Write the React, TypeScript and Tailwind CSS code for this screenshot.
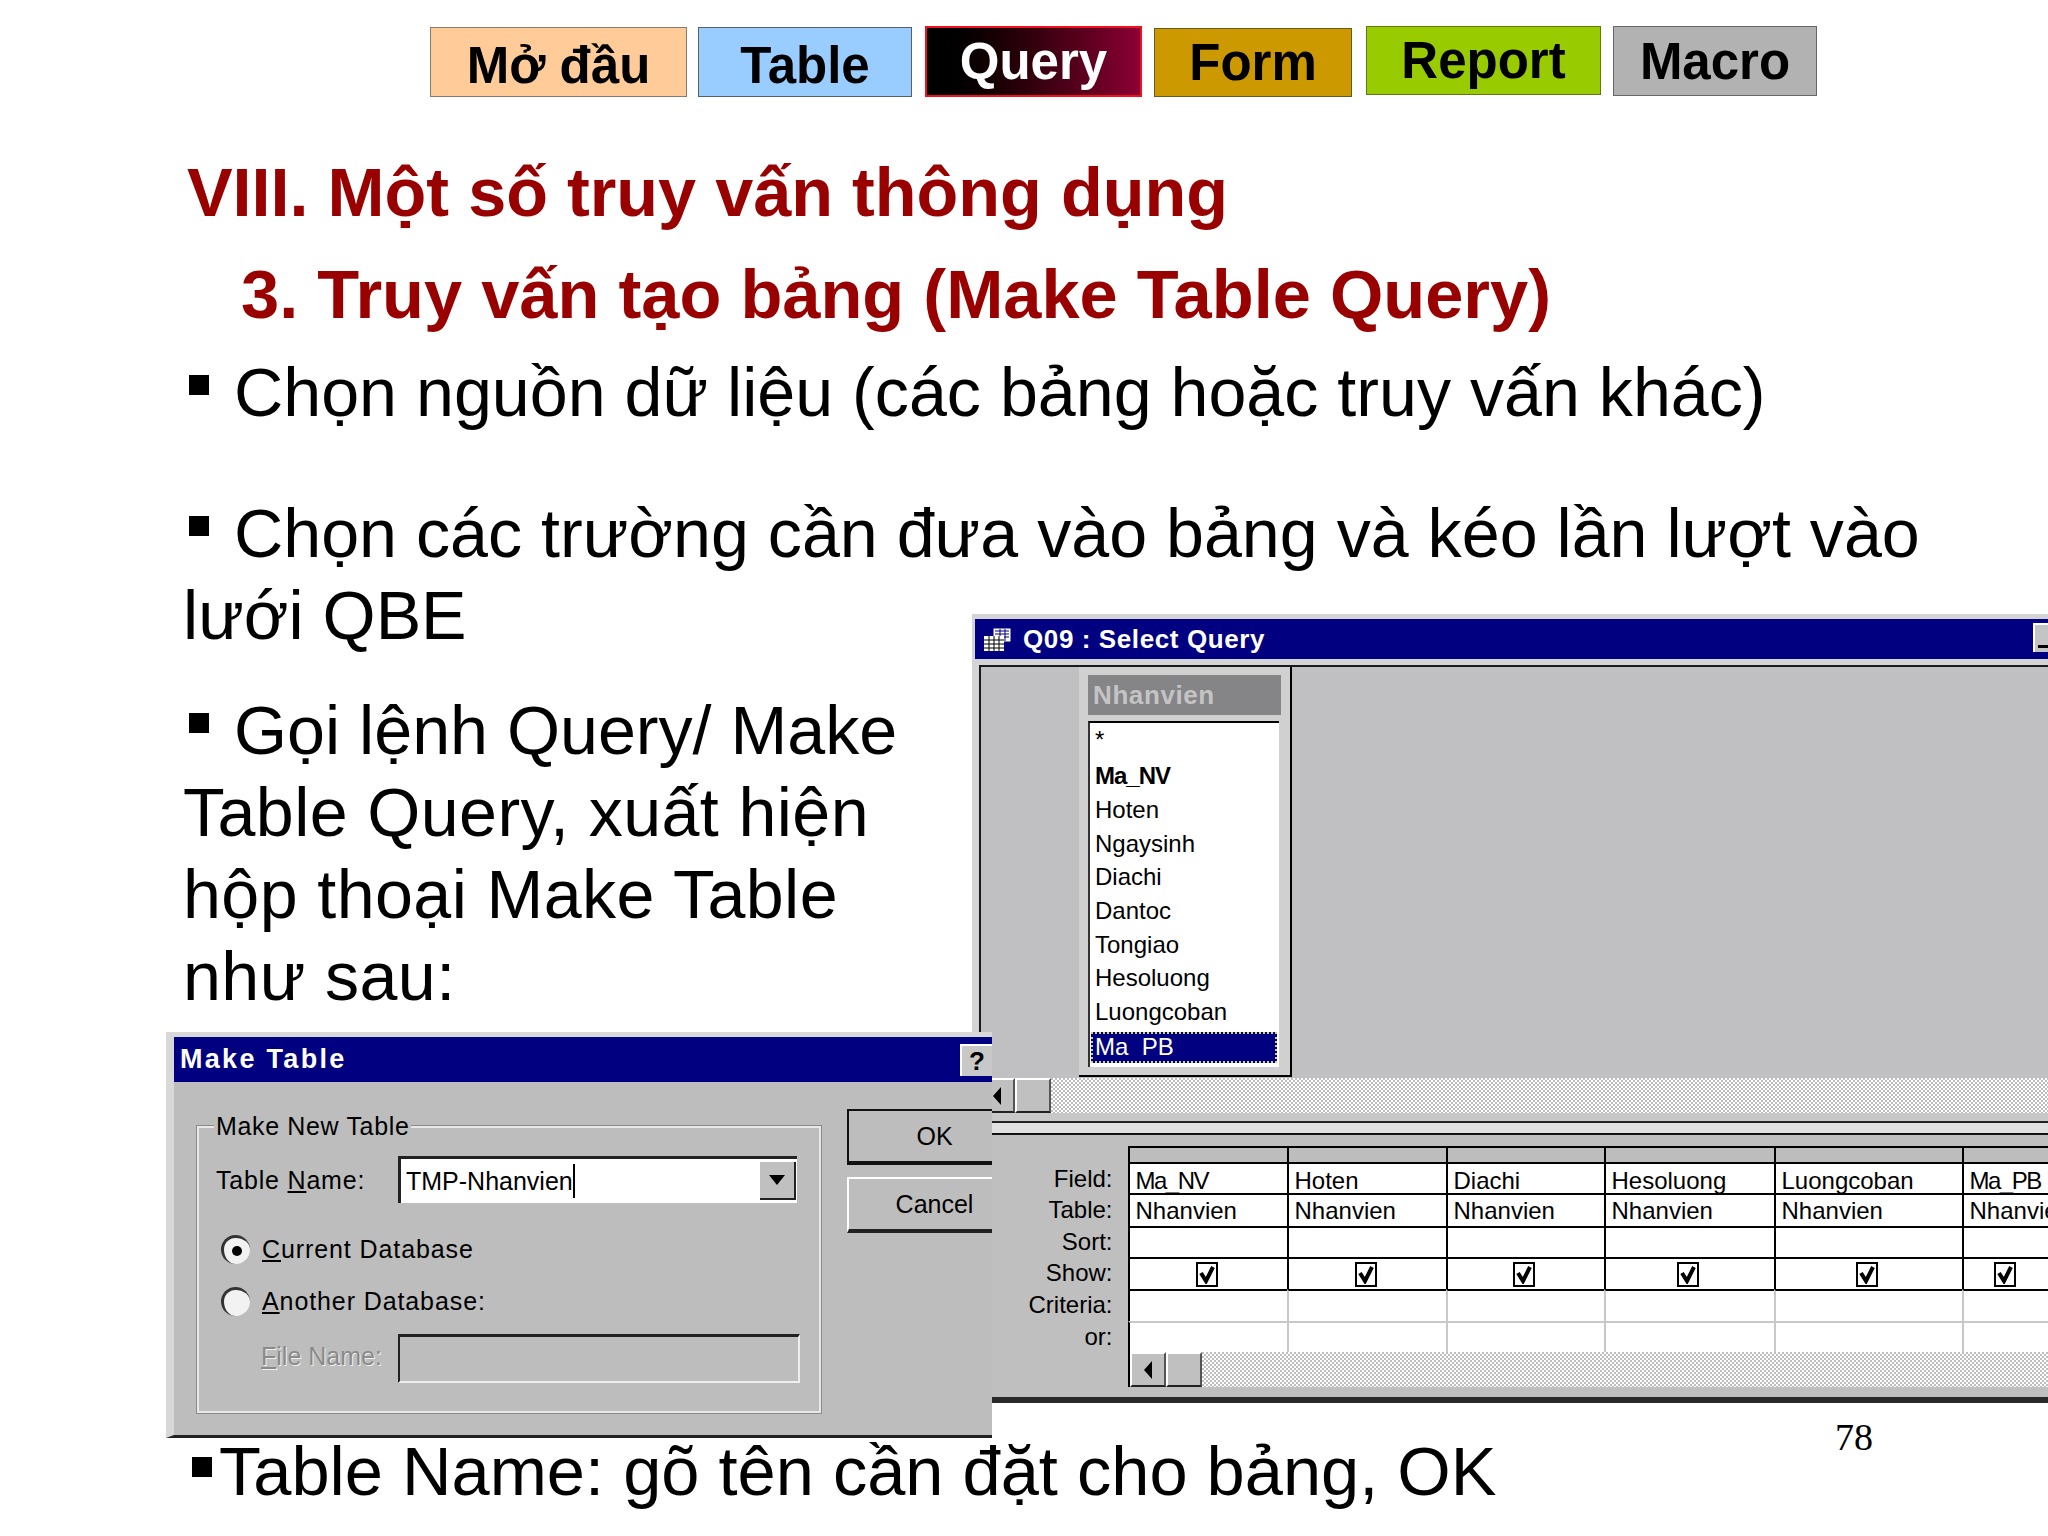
import React from 'react';

const navItems = [
  { label: 'Mở đầu', box: 'w-[257px] h-[70px] mt-[1px] mr-[11px] bg-[#ffcc99] border-[#8a7a6a]', text: 'text-black pt-[6px]' },
  { label: 'Table', box: 'w-[214px] h-[70px] mt-[1px] mr-[13px] bg-[#99ccff] border-[#55606a]', text: 'text-black pt-[6px]' },
  { label: 'Query', box: 'w-[217px] h-[71px] mr-[12px] bg-gradient-to-r from-black to-[#8c0033] border-[#f01020] border-2', text: 'text-white' },
  { label: 'Form', box: 'w-[198px] h-[69px] mt-[2px] mr-[14px] bg-[#cc9900] border-[#6a5a20]', text: 'text-black' },
  { label: 'Report', box: 'w-[235px] h-[69px] mr-[12px] bg-[#99cc00] border-[#5e7a10]', text: 'text-black' },
  { label: 'Macro', box: 'w-[204px] h-[70px] bg-[#b2b2b2] border-[#666666]', text: 'text-black' },
];

const tableFields = ['Hoten', 'Ngaysinh', 'Diachi', 'Dantoc', 'Tongiao', 'Hesoluong', 'Luongcoban'];

const gridLabels = ['Field:', 'Table:', 'Sort:', 'Show:', 'Criteria:', 'or:'];
const gridFields = ['Ma_NV', 'Hoten', 'Diachi', 'Hesoluong', 'Luongcoban', 'Ma_PB'];

// Square bullet used in front of the slide's list items
const Bullet = () => <span className="inline-block w-[20px] h-[20px] bg-black ml-[6px] mr-[25px] align-[21px]" />;

const ArrowLeft = () => (
  <svg width="10" height="18" viewBox="0 0 10 18" className="block">
    <path d="M9 0 L1 9 L9 18 Z" fill="#000" />
  </svg>
);

const Scrollbar = () => (
  <div className="flex h-[35px] w-full">
    <div className="w-[36px] h-full shrink-0 flex items-center justify-center bg-[#c0c0c0] border-t-2 border-l-2 border-t-white border-l-white border-r-2 border-b-2 border-r-[#555] border-b-[#222]">
      <ArrowLeft />
    </div>
    <div className="w-[36px] h-full shrink-0 bg-[#c0c0c0] border-t-2 border-l-2 border-t-white border-l-white border-r-2 border-b-2 border-r-[#555] border-b-[#222]" />
    <div className="flex-1 h-full bg-[repeating-conic-gradient(#ffffff_0_25%,#bdbdbd_0_50%)] bg-[length:4px_4px]" />
  </div>
);

const Check = () => (
  <div className="w-[22px] h-[25px] border-2 border-black bg-white flex items-center justify-center">
    <svg width="16" height="19" viewBox="0 0 16 19">
      <path d="M2 8 L7 16 L14 2" fill="none" stroke="#000" strokeWidth="4" />
    </svg>
  </div>
);

const QueryWindow = () => (
  <div className="absolute left-[972px] top-[614px] w-[1076px] h-[789px] bg-[#d4d3d5] pl-[3px] pt-[5px] flex flex-col overflow-hidden border-b-[6px] border-[#2a2a2a] text-[24px] leading-[30px] text-black">
    {/* Title bar */}
    <div className="h-[40px] shrink-0 bg-[#000080] flex items-center pl-[8px] gap-[10px] relative">
      <svg width="30" height="25" viewBox="0 0 30 25" className="shrink-0">
        <rect x="10" y="1" width="18" height="14" fill="#fff" stroke="#000080" />
        <path d="M12 4h14M12 7h14M12 10h14M17 2v12M22 2v12" stroke="#000080" strokeWidth="1" />
        <rect x="1" y="9" width="20" height="15" fill="#fff" />
        <path d="M1 13h20M1 17h20M1 21h20M6 9v15M11 9v15M16 9v15" stroke="#000" strokeWidth="1" />
      </svg>
      <span className="text-white font-bold text-[26px] tracking-[0.6px] leading-none">Q09 : Select Query</span>
      <div className="absolute right-0 top-[4px] w-[15px] h-[29px] bg-[#c4c4c4] border-t-2 border-l-2 border-white">
        <div className="w-[12px] h-[3px] bg-black mt-[20px] ml-[3px]" />
      </div>
    </div>

    {/* Table pane */}
    <div className="h-[6px] shrink-0" />
    <div className="h-[413px] shrink-0 bg-[#c0bfc1] border-t-2 border-l-2 border-[#1a1a1a] ml-[4px] pl-[98px]">
      <div className="w-[213px] h-[410px] bg-[#d0d0d0] border-r-2 border-b-2 border-r-black border-b-black pt-[8px] px-[9px] flex flex-col">
        <div className="h-[40px] shrink-0 bg-[#858487] flex items-center pl-[5px] text-[#c4c4c4] font-bold text-[26px] tracking-[0.6px]">Nhanvien</div>
        <div className="h-[6px] shrink-0" />
        <div className="h-[346px] shrink-0 w-[191px] bg-white border-t-2 border-l-2 border-t-black border-l-[#333] pl-[4px] flex flex-col">
          <div className="h-[32px] pl-[1px] pt-[1px] flex items-center">*</div>
          <div className="h-[4px]" />
          <div className="h-[34px] pl-[1px] flex items-center font-bold tracking-[-1px]">Ma_NV</div>
          {tableFields.map(field => (
            <div key={field} className="h-[33.7px] pl-[1px] flex items-center">{field}</div>
          ))}
          <div className="h-[31px] w-[186px] -ml-[3px] mt-[3px] bg-[#000080] border-2 border-dotted border-[#d8d870] flex items-center text-white pl-[2px]">
            Ma<span className="text-[#000080]">_</span>PB
          </div>
        </div>
      </div>
    </div>

    <div className="shrink-0 pl-[4px]">
      <Scrollbar />
    </div>

    {/* Splitter */}
    <div className="h-[10px] shrink-0 bg-[#c8c8c8] border-b-2 border-[#222] ml-[4px]" />
    <div className="h-[12px] shrink-0 bg-[#e0e0e0] border-b-2 border-[#111] ml-[4px]" />

    {/* Query grid */}
    <div className="flex-1 bg-[#bfbfbf] pt-[11px]">
      <div className="grid grid-cols-[152.5px_159px_159px_158px_170px_188px_88px] grid-rows-[16px_31px_33px_31px_32px_32px_31px_35px]">
        <div />
        {gridFields.map(field => (
          <div key={field} className="bg-[#bdbdbd] border-t-2 border-l-2 border-black" />
        ))}

        <div className="flex items-center justify-end pr-[15px] pt-[3px]">{gridLabels[0]}</div>
        {gridFields.map(field => (
          <div key={field} className={`bg-white border-t-2 border-l-2 border-black flex items-center pl-[6px] pt-[4px] overflow-hidden whitespace-nowrap ${field.startsWith('Ma_') ? 'tracking-[-1.5px]' : ''}`}>{field}</div>
        ))}

        <div className="flex items-center justify-end pr-[15px]">{gridLabels[1]}</div>
        {gridFields.map(field => (
          <div key={field} className="bg-white border-t-2 border-l-2 border-black flex items-center pl-[6px] pt-[1px] overflow-hidden whitespace-nowrap">Nhanvien</div>
        ))}

        <div className="flex items-center justify-end pr-[15px]">{gridLabels[2]}</div>
        {gridFields.map(field => (
          <div key={field} className="bg-white border-t-2 border-l-2 border-black" />
        ))}

        <div className="flex items-center justify-end pr-[15px]">{gridLabels[3]}</div>
        {gridFields.map(field => (
          <div key={field} className="bg-white border-t-2 border-l-2 border-black flex items-center justify-center pr-[3px] overflow-hidden">
            <Check />
          </div>
        ))}

        <div className="flex items-center justify-end pr-[15px]">{gridLabels[4]}</div>
        {gridFields.map((field, i) => (
          <div key={field} className={`bg-white border-t-2 border-t-black border-l-2 ${i === 0 ? 'border-l-black' : 'border-l-[#c8c8c8]'}`} />
        ))}

        <div className="flex items-center justify-end pr-[15px]">{gridLabels[5]}</div>
        {gridFields.map((field, i) => (
          <div key={field} className={`bg-white border-t-2 border-t-[#c8c8c8] border-l-2 ${i === 0 ? 'border-l-black' : 'border-l-[#c8c8c8]'}`} />
        ))}

        <div />
        <div className="col-span-6 border-l-2 border-b-2 border-black">
          <Scrollbar />
        </div>
      </div>
    </div>
  </div>
);

const DialogButton = ({ label, isDefault }: { label: string; isDefault?: boolean }) => (
  <div className={`h-[56px] w-full flex items-center justify-center pl-[28px] bg-[#bdbdbd] border-t-2 border-l-2 ${isDefault ? 'border-[#111] border-b-4 border-t-2' : 'border-white border-b-4 border-b-[#222]'}`}>
    {label}
  </div>
);

const Radio = ({ checked }: { checked?: boolean }) => (
  <div className="w-[29px] h-[29px] shrink-0 rounded-full bg-[#f2f2f2] border-t-[3px] border-l-[3px] border-[#333] flex items-center justify-center">
    {checked && <div className="w-[10px] h-[10px] rounded-full bg-black" />}
  </div>
);

const MakeTableDialog = () => (
  <div className="absolute left-[166px] top-[1032px] w-[826px] h-[406px] bg-[#bdbdbd] border-t-[5px] border-l-[8px] border-t-[#d8d8d8] border-l-[#d8d8d8] border-b-[3px] border-b-[#222] text-[25px] leading-[30px] text-black overflow-hidden">
    <div className="h-[45px] bg-[#000080] flex items-center justify-between pl-[6px]">
      <span className="text-white font-bold text-[27px] tracking-[2.3px] leading-none">Make Table</span>
      <div className="w-[32px] h-[32px] bg-[#c8c8c8] border-t-2 border-l-2 border-white flex items-center justify-center font-bold text-[26px]">?</div>
    </div>
    <div className="flex items-start">
      {/* Group box */}
      <div className="relative w-[624px] h-[287px] mt-[44px] ml-[23px] border-2 border-[#e8e8e8] outline outline-1 outline-[#8a8a8a] pt-[28px] pl-[17px]">
        <span className="absolute left-[15px] top-[-17px] bg-[#bdbdbd] px-[2px] tracking-[0.65px]">Make New Table</span>
        <div className="flex items-center">
          <span className="w-[182px] tracking-[0.8px]">Table <span className="underline">N</span>ame:</span>
          <div className="w-[399px] h-[47px] bg-white border-t-[3px] border-l-[3px] border-[#222] flex items-center justify-between pl-[5px] pr-[1px]">
            <span className="flex items-center">TMP-Nhanvien<span className="w-[2px] h-[34px] bg-black" /></span>
            <div className="w-[36px] h-[38px] bg-[#c0c0c0] border-r-2 border-b-2 border-[#222] flex items-center justify-center">
              <svg width="16" height="10" viewBox="0 0 16 10"><path d="M0 0 H16 L8 10 Z" fill="#000" /></svg>
            </div>
          </div>
        </div>
        <div className="flex items-center gap-[12px] mt-[31px] ml-[5px]">
          <Radio checked />
          <span className="tracking-[0.9px]">
            <span className="underline">C</span>urrent Database
          </span>
        </div>
        <div className="flex items-center gap-[12px] mt-[22px] ml-[5px]">
          <Radio />
          <span className="tracking-[0.9px]">
            <span className="underline">A</span>nother Database:
          </span>
        </div>
        <div className="flex items-center mt-[18px] ml-[45px]">
          <span className="w-[137px] text-[#8a8a8a] [text-shadow:1px_1px_0_#f0f0f0] pb-[6px]">
            <span className="underline">F</span>ile Name:
          </span>
          <div className="w-[402px] h-[49px] border-t-[3px] border-l-2 border-t-[#222] border-l-[#222] border-r-2 border-b-2 border-r-[#eee] border-b-[#eee]" />
        </div>
      </div>
      {/* Buttons, cut off by the window edge */}
      <div className="w-[145px] ml-[26px] mt-[27px] flex flex-col gap-[12px] shrink-0">
        <DialogButton label="OK" isDefault />
        <DialogButton label="Cancel" />
      </div>
    </div>
  </div>
);

export default function App() {
  return (
    <div className="relative w-[2048px] h-[1536px] bg-white overflow-hidden font-['Liberation_Sans',Arial,sans-serif] text-black">
      {/* Navigation buttons */}
      <div className="flex items-start pt-[26px] pl-[430px]">
        {navItems.map(item => (
          <div key={item.label} className={`flex items-center justify-center border ${item.box}`}>
            <span className={`font-bold text-[51px] leading-none ${item.text}`}>{item.label}</span>
          </div>
        ))}
      </div>

      {/* Headings */}
      <h1 className="mt-[54px] pl-[187px] text-[68.4px] leading-[82px] font-bold text-[#990000]">VIII. Một số truy vấn thông dụng</h1>
      <h2 className="mt-[21px] pl-[241px] text-[68.6px] leading-[82px] font-bold text-[#990000]">3. Truy vấn tạo bảng (Make Table Query)</h2>

      {/* Bullets */}
      <div className="text-[68.2px] leading-[82px] pl-[183px]">
        <p className="mt-[15px] whitespace-nowrap"><Bullet />Chọn nguồn dữ liệu (các bảng hoặc truy vấn khác)</p>
        <p className="mt-[59px] w-[1780px]"><Bullet />Chọn các trường cần đưa vào bảng và kéo lần lượt vào lưới QBE</p>
        <p className="mt-[33px] w-[760px] tracking-[0.4px]"><Bullet /><span className="tracking-normal">Gọi lệnh Query/ Make</span> Table Query, xuất hiện hộp thoại Make Table như sau:</p>
        <p className="mt-[414px] whitespace-nowrap text-[68.6px]"><span className="inline-block w-[20px] h-[20px] bg-black ml-[9px] mr-[7px] align-[18px]" />Table Name: gõ tên cần đặt cho bảng, OK</p>
      </div>

      <QueryWindow />
      <MakeTableDialog />

      {/* Page number */}
      <div className="absolute left-[1835px] top-[1414px] font-['Liberation_Serif',serif] text-[38px] leading-[46px]">78</div>
    </div>
  );
}
